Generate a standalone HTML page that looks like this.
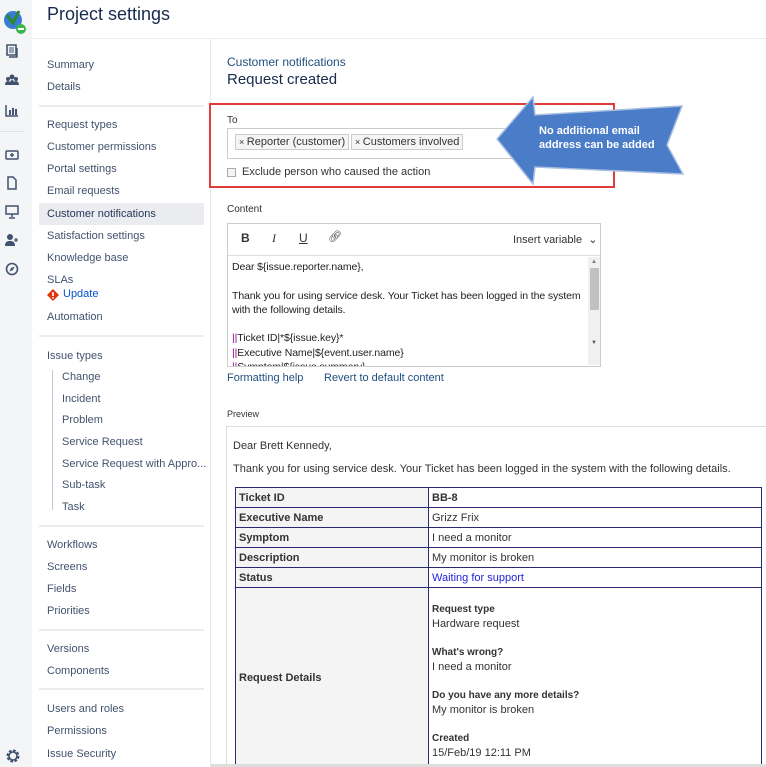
<!DOCTYPE html>
<html><head><meta charset="utf-8"><style>
*{margin:0;padding:0;box-sizing:border-box}
html{overflow:hidden;height:767px}
body{width:766px;height:767px;overflow:hidden;background:#fff;font-family:"Liberation Sans",sans-serif;color:#333;position:relative}
.a{position:absolute;white-space:nowrap}
#bar{position:absolute;left:0;top:0;width:32px;height:767px;background:#f4f5f7}
#side{position:absolute;left:32px;top:39px;width:179px;height:728px;border-right:1px solid #e5e7ea}
.s{position:absolute;left:47px;font-size:11px;color:#42526e}
.sub{left:62px}
.hr{position:absolute;left:39px;width:165px;height:2px;background:#ebecf0}
.m{font-size:11px;color:#333}
.ic{position:absolute;left:5px;width:14px;height:14px;fill:#42526e}
table{position:absolute;left:235px;top:487px;width:527px;border-collapse:collapse;font-size:11px}
td{border:1px solid #2a2a72;height:20px;padding:0 3px;vertical-align:middle}
td.l{background:#f4f4f4;font-weight:bold;width:193px}
</style></head><body>
<div id="bar">
<svg class="ic" style="left:2px;top:8px;width:24px;height:26px" viewBox="0 0 24 26"><circle cx="11" cy="12" r="9" fill="#3a7bd5"/><path d="M5 7l6 8 6-12" stroke="#2c8a2c" stroke-width="3" fill="none"/><circle cx="19" cy="21" r="5" fill="#3bb54a"/><rect x="16" y="20" width="6" height="2" fill="#fff"/></svg>
<svg class="ic" style="top:44px" viewBox="0 0 14 14"><path d="M2 1h9v10H2z" fill="none" stroke="#42526e" stroke-width="1.6"/><path d="M4 4h5M4 6h5M4 8h5" stroke="#42526e"/><path d="M12 4v9H4" fill="none" stroke="#42526e" stroke-width="1.4"/></svg>
<svg class="ic" style="top:73px" viewBox="0 0 14 14"><circle cx="7" cy="4" r="2.5"/><circle cx="3" cy="6" r="2"/><circle cx="11" cy="6" r="2"/><path d="M0 12c0-3 2-4 3-4s2 1 2 1 1-2 2-2 2 1 2 2c0 0 1-1 2-1s3 1 3 4z"/></svg>
<svg class="ic" style="top:103px" viewBox="0 0 14 14"><path d="M1 2v11h12" fill="none" stroke="#42526e" stroke-width="1.5"/><rect x="4" y="7" width="2" height="5"/><rect x="7" y="5" width="2" height="7"/><rect x="10" y="6" width="2" height="6"/></svg>
<div style="position:absolute;left:0;top:131px;width:24px;height:1px;background:#dfe1e6"></div>
<svg class="ic" style="top:148px" viewBox="0 0 14 14"><rect x="1" y="3" width="12" height="8" rx="1" fill="none" stroke="#42526e" stroke-width="1.5"/><path d="M5 7h4M7 5v4" stroke="#42526e" stroke-width="1.5"/></svg>
<svg class="ic" style="top:176px" viewBox="0 0 14 14"><path d="M3 1h5l3 3v9H3z" fill="none" stroke="#42526e" stroke-width="1.5"/></svg>
<svg class="ic" style="top:205px" viewBox="0 0 14 14"><rect x="1" y="1" width="12" height="8" fill="none" stroke="#42526e" stroke-width="1.5"/><path d="M7 9v3M4 13h6" stroke="#42526e" stroke-width="1.5"/></svg>
<svg class="ic" style="top:233px" viewBox="0 0 14 14"><circle cx="5" cy="4" r="3"/><path d="M0 13c0-4 2-5 5-5s5 1 5 5z"/><path d="M11 5v4M9 7h4" stroke="#42526e" stroke-width="1.3"/></svg>
<svg class="ic" style="top:262px" viewBox="0 0 14 14"><circle cx="7" cy="7" r="5.5" fill="none" stroke="#42526e" stroke-width="1.6"/><path d="M9.5 4.5L8 8 4.5 9.5 6 6z"/></svg>
<svg class="ic" style="top:748px;width:16px;height:16px" viewBox="0 0 16 16"><circle cx="8" cy="8" r="5" fill="none" stroke="#42526e" stroke-width="3" stroke-dasharray="2.5 1.4"/><circle cx="8" cy="8" r="4" fill="none" stroke="#42526e" stroke-width="1.6"/></svg>
</div>
<div id="side"></div>
<div class="a" style="left:47px;top:4px;font-size:18px;color:#172b4d">Project settings</div>
<div style="position:absolute;left:32px;top:38px;width:734px;height:1px;background:#ebecf0"></div>
<div style="position:absolute;left:39px;top:203px;width:165px;height:22px;background:#ebecf0"></div>
<div class="s a" style="top:59px">Summary</div>
<div class="s a" style="top:81px">Details</div>
<div class="hr" style="top:105px"></div>
<div class="s a" style="top:119px">Request types</div>
<div class="s a" style="top:141px">Customer permissions</div>
<div class="s a" style="top:163px">Portal settings</div>
<div class="s a" style="top:185px">Email requests</div>
<div class="s a" style="top:208px;color:#253858">Customer notifications</div>
<div class="s a" style="top:230px">Satisfaction settings</div>
<div class="s a" style="top:252px">Knowledge base</div>
<div class="s a" style="top:274px">SLAs</div>
<svg style="position:absolute;left:47px;top:289px" width="12" height="12" viewBox="0 0 12 12"><path d="M6 0l6 6-6 6-6-6z" fill="#de350b"/><rect x="5.2" y="3" width="1.6" height="4" fill="#fff"/><rect x="5.2" y="8" width="1.6" height="1.5" fill="#fff"/></svg>
<div class="s a" style="top:288px;left:63px;color:#0052cc">Update</div>
<div class="s a" style="top:311px">Automation</div>
<div class="hr" style="top:335px"></div>
<div class="s a" style="top:350px">Issue types</div>
<div style="position:absolute;left:52px;top:370px;width:1px;height:140px;background:#c1c7d0"></div>
<div class="s a sub" style="top:371px">Change</div>
<div class="s a sub" style="top:393px">Incident</div>
<div class="s a sub" style="top:414px">Problem</div>
<div class="s a sub" style="top:436px">Service Request</div>
<div class="s a sub" style="top:458px">Service Request with Appro...</div>
<div class="s a sub" style="top:479px">Sub-task</div>
<div class="s a sub" style="top:501px">Task</div>
<div class="hr" style="top:525px"></div>
<div class="s a" style="top:539px">Workflows</div>
<div class="s a" style="top:561px">Screens</div>
<div class="s a" style="top:583px">Fields</div>
<div class="s a" style="top:605px">Priorities</div>
<div class="hr" style="top:629px"></div>
<div class="s a" style="top:643px">Versions</div>
<div class="s a" style="top:665px">Components</div>
<div class="hr" style="top:688px"></div>
<div class="s a" style="top:703px">Users and roles</div>
<div class="s a" style="top:725px">Permissions</div>
<div class="s a" style="top:748px">Issue Security</div>

<div class="a" style="left:227px;top:55px;font-size:12px;color:#205081">Customer notifications</div>
<div class="a" style="left:227px;top:71px;font-size:15px;color:#172b4d">Request created</div>
<div style="position:absolute;left:209px;top:103px;width:406px;height:85px;border:2px solid #e03c3c"></div>
<div class="a" style="left:227px;top:115px;font-size:10px">To</div>
<div style="position:absolute;left:227px;top:128px;width:300px;height:31px;border:1px solid #ccc"></div>
<div class="a m" style="left:235px;top:134px;border:1px solid #ccc;background:#f5f5f5;padding:1px 3px;font-size:11px"><span style="font-size:9px">× </span>Reporter (customer)</div>
<div class="a m" style="left:351px;top:134px;border:1px solid #ccc;background:#f5f5f5;padding:1px 3px;font-size:11px"><span style="font-size:9px">× </span>Customers involved</div>
<div style="position:absolute;left:227px;top:168px;width:9px;height:9px;border:1px solid #aaa;background:#f4f4f4"></div>
<div class="a m" style="left:242px;top:166px">Exclude person who caused the action</div>
<svg style="position:absolute;left:490px;top:92px" width="200" height="98" viewBox="490 92 200 98"><polygon points="497,139 533,97 535,115 682,106 667,145 683,174 535,167 533,184" fill="#4a7cc8" stroke="#a9bfe0" stroke-width="1.5"/></svg>
<div class="a" style="left:539px;top:124px;font-size:11px;font-weight:bold;color:#fff;line-height:14px">No additional email<br>address can be added</div>

<div class="a" style="left:227px;top:204px;font-size:10px">Content</div>
<div style="position:absolute;left:227px;top:223px;width:374px;height:144px;border:1px solid #ccc"></div>
<div style="position:absolute;left:228px;top:255px;width:372px;height:1px;background:#ddd"></div>
<div class="a" style="left:241px;top:231px;font-size:12px;font-weight:bold">B</div>
<div class="a" style="left:272px;top:231px;font-size:12px;font-style:italic;font-family:'Liberation Serif',serif">I</div>
<div class="a" style="left:299px;top:231px;font-size:12px;text-decoration:underline">U</div>
<div class="a" style="left:328px;top:230px;font-size:11px">&#x1F517;&#xFE0E;</div>
<div class="a m" style="left:513px;top:233px">Insert variable &nbsp;⌄</div>
<div style="position:absolute;left:588px;top:257px;width:12px;height:108px;background:#f0f0f0"></div>
<div style="position:absolute;left:590px;top:268px;width:9px;height:42px;background:#c1c1c1"></div>
<div class="a" style="left:591px;top:259px;font-size:6px;color:#777">▲</div>
<div class="a" style="left:591px;top:340px;font-size:6px;color:#555">▼</div>
<div style="position:absolute;left:232px;top:260px;width:356px;height:106px;overflow:hidden;font-size:10.5px;line-height:14.3px;color:#222;letter-spacing:-0.1px">
Dear ${issue.reporter.name},<br><br>Thank you for using service desk. Your Ticket has been logged in the system with the following details.<br><br><span style="color:#808">||</span>Ticket ID|*${issue.key}*<br><span style="color:#808">||</span>Executive Name|${event.user.name}<br><span style="color:#808">||</span>Symptom|${issue.summary}</div>
<div class="a" style="left:227px;top:372px;font-size:11px;color:#205081">Formatting help</div>
<div class="a" style="left:324px;top:372px;font-size:11px;color:#205081">Revert to default content</div>

<div class="a" style="left:227px;top:409px;font-size:9px">Preview</div>
<div style="position:absolute;left:226px;top:426px;width:560px;height:340px;border:1px solid #ddd;border-right:none"></div>
<div class="a m" style="left:233px;top:440px">Dear Brett Kennedy,</div>
<div class="a m" style="left:233px;top:463px">Thank you for using service desk. Your Ticket has been logged in the system with the following details.</div>
<table>
<tr><td class="l">Ticket ID</td><td style="font-weight:bold">BB-8</td></tr>
<tr><td class="l">Executive Name</td><td>Grizz Frix</td></tr>
<tr><td class="l">Symptom</td><td>I need a monitor</td></tr>
<tr><td class="l">Description</td><td>My monitor is broken</td></tr>
<tr><td class="l">Status</td><td style="color:#2222dd">Waiting for support</td></tr>
<tr><td class="l" style="height:180px">Request Details</td><td style="vertical-align:top;padding-top:14px;line-height:14px">
<b style="font-size:10px">Request type</b><br>Hardware request<br><br style="line-height:13px"><b style="font-size:10px">What's wrong?</b><br>I need a monitor<br><br style="line-height:13px"><b style="font-size:10px">Do you have any more details?</b><br>My monitor is broken<br><br style="line-height:13px"><b style="font-size:10px">Created</b><br>15/Feb/19 12:11 PM</td></tr>
</table>
<div style="position:absolute;left:211px;top:764px;width:555px;height:3px;background:#ddd"></div>
</body></html>
